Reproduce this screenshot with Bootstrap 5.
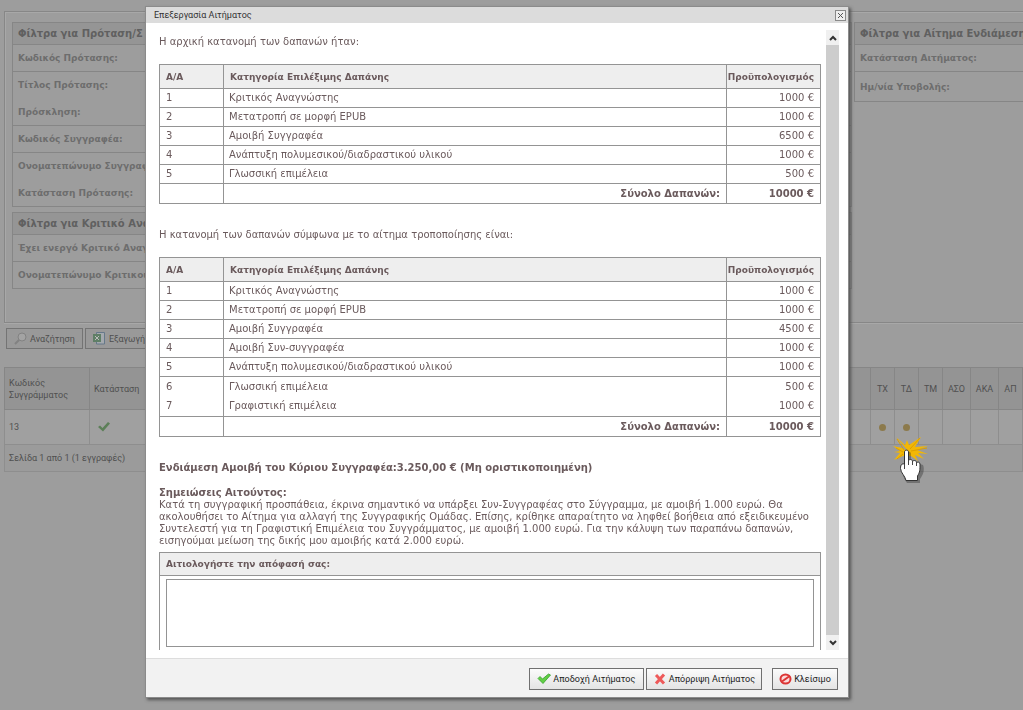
<!DOCTYPE html>
<html lang="el">
<head>
<meta charset="utf-8">
<meta name="viewport" content="width=device-width, initial-scale=1">
<title>Επεξεργασία Αιτήματος</title>
<link href="https://cdn.jsdelivr.net/npm/bootstrap@5.3.0/dist/css/bootstrap.min.css" rel="stylesheet">
<style>
  html, body { height: 100%; }
  body { background: #9d9d9d; font-family: "DejaVu Sans", Verdana, sans-serif; font-size: 10px; line-height: 12px; color: #6a5a5c; overflow: hidden; }
  .ui-narrow, .ui-narrow button { font-family: Roboto, Tahoma, sans-serif; font-size: 9px; }

  /* dimmed page */
  .page-dim { padding: 11px 0 0 4px; color: #6d6d6d; overflow: hidden; }
  .filter-box { border: 1px solid #878787; border-right: 0; box-shadow: inset 1px 1px 0 #a8a8a8, 0 1px 0 #a8a8a8; padding: 10px 0 0 7px; min-height: 312px; gap: 2px; overflow: hidden; }
  .filter-left { flex: 0 0 840px; }
  .filter-right { flex: 1 1 0; min-width: 0; }
  .filter-tbl { width: 100%; border: 1px solid #868686; margin-bottom: 5px; border-collapse: collapse; white-space: nowrap; }
  .filter-right .filter-tbl { border-right: 0; }
  .filter-tbl th { padding: 0 5px; font-weight: bold; font-size: 9px; }
  .filter-tbl thead th { background: #959595; height: 22px; font-size: 10px; color: #606060; border-bottom: 1px solid #868686; }
  .filter-right .filter-tbl th { padding-right: 0; }
  .filter-tbl tbody th { height: 27px; border-bottom: 1px solid #868686; }
  .filter-tbl tr.joined th { border-bottom: 0; }
  .filter-tbl.tall tbody tr:last-child th { height: 30px; }
  .tool-row { gap: 2px; padding: 5px 0 18px 2px; }
  .dim-btn { border: 1px solid #747474; background: #999; color: #4f4f4f; height: 21px; padding: 0 7px; gap: 3px; white-space: nowrap; min-width: 77px; }
  .grid-tbl { width: 100%; border: 1px solid #868686; border-collapse: collapse; table-layout: fixed; color: #505050; }
  .grid-tbl th { background: #949494; height: 42px; font-weight: normal; border: 1px solid #868686; padding: 0 4px; }
  .grid-tbl th.text-center { padding: 0; }
  .grid-tbl td { height: 35px; border: 1px solid #8e8e8e; padding: 0 4px; background: #a0a0a0; }
  .grid-tbl tfoot td { height: 27px; background: #9b9b9b; }
  .w-code { width: 85px; } .w-state { width: 60px; } .w-flag { width: 24px; } .w-wide { width: 28px; }
  .status-dot { width: 7px; height: 7px; border-radius: 50%; background: #8c7a4c; display: block; margin: auto; }

  /* dialog */
  .overlay { padding: 6px 174px 12px 145px; }
  .dlg { background: #fff; border: 1px solid #8b8b8b; box-shadow: 2px 2px 3px #555; }
  .dlg-title { background: #dcdcdc; height: 16px; padding: 0 2px 0 8px; color: #333; }
  .dlg-close { width: 11px; height: 11px; border: 1px solid #8a8a8a; background: #eee; padding: 0; }
  .dlg-body { flex: 1 1 0; min-height: 0; padding: 7px 9px 8px 13px; }
  .dlg-content { overflow: hidden; min-width: 0; padding-top: 6px; }
  .scroll-col { width: 13px; background: #cdcdcd; margin-left: 5px; }
  .scroll-btn { height: 15px; background: #f0f0f0; border: 0; padding: 0; }
  .dlg-foot { height: 39px; background: #f2f2f2; border-top: 1px solid #ddd; padding: 2px 10px 0 0; gap: 2px; }
  .cost-tbl { width: 100%; border-collapse: collapse; margin: 16px 0 25px; }
  .cost-tbl th, .cost-tbl td { border: 1px solid #949494; padding: 0 6px; height: 19px; }
  .cost-tbl td:nth-child(2) { padding-left: 5px; }
  .cost-tbl thead th { background: #eee; height: 24px; font-size: 9px; }
  .cost-tbl tfoot th, .cost-tbl tr.joined td, .cost-tbl tr.joined + tr td { height: 20px; }
  .cost-tbl .c-no { width: 64px; }
  .cost-tbl .c-sum { width: 94px; padding-left: 0; }
  .cost-tbl tr.joined td { border-bottom-style: hidden; }
  .lead-line { margin-bottom: 13px; }
  .note-text { margin-bottom: 5px; }
  .reason { border: 1px solid #949494; border-bottom: 0; }
  .reason label { height: 23px; background: #eee; border-bottom: 1px solid #949494; padding: 0 6px; font-weight: bold; font-size: 9px; }
  .reason textarea { height: 68px; border: 1px solid #949494; margin: 3px 6px 10px; resize: none; border-radius: 0; }
  .act { height: 22px; border: 1px solid #707070; background: linear-gradient(#fbfbfb, #e4e4e4); color: #222; padding: 0 6px; gap: 2px; white-space: nowrap; min-width: 66px; }
  .act-wide { min-width: 115px; }
  .hand { left: 892px; top: 436px; }
</style>
</head>
<body>
<main class="page-dim">
  <section class="filter-box d-flex align-items-start">
    <div class="filter-left">
      <table class="filter-tbl">
        <thead><tr><th>Φίλτρα για Πρόταση/Σ</th></tr></thead>
        <tbody>
          <tr><th>Κωδικός Πρότασης:</th></tr>
          <tr class="joined"><th>Τίτλος Πρότασης:</th></tr>
          <tr><th>Πρόσκληση:</th></tr>
          <tr><th>Κωδικός Συγγραφέα:</th></tr>
          <tr class="joined"><th>Ονοματεπώνυμο Συγγραφ</th></tr>
          <tr><th>Κατάσταση Πρότασης:</th></tr>
        </tbody>
      </table>
      <table class="filter-tbl">
        <thead><tr><th>Φίλτρα για Κριτικό Ανα</th></tr></thead>
        <tbody>
          <tr><th>Έχει ενεργό Κριτικό Αναγ</th></tr>
          <tr><th>Ονοματεπώνυμο Κριτικού</th></tr>
        </tbody>
      </table>
    </div>
    <div class="filter-right">
      <table class="filter-tbl tall">
        <thead><tr><th>Φίλτρα για Αίτημα Ενδιάμεση</th></tr></thead>
        <tbody>
          <tr><th>Κατάσταση Αιτήματος:</th></tr>
          <tr><th>Ημ/νία Υποβολής:</th></tr>
        </tbody>
      </table>
    </div>
  </section>
  <div class="tool-row d-flex ui-narrow">
    <button class="dim-btn d-flex align-items-center" type="button">
      <svg width="13" height="13" viewBox="0 0 13 13" fill="none"><circle cx="8" cy="5" r="4" fill="#a3a3a3" stroke="#828282"/><path d="M5 8L1 12" stroke="#828282" stroke-width="2"/></svg>
      Αναζήτηση</button>
    <button class="dim-btn d-flex align-items-center" type="button">
      <svg width="13" height="13" viewBox="0 0 13 13"><path d="M3.500 .5h8v11.500h-8z" fill="#a4a9ae" stroke="#66788a"/><path d="M0 2h8v8H0z" fill="#5f7f66"/><path d="M2 4l4 4M6 4L2 8" stroke="#bbb"/></svg>
      Εξαγωγή</button>
  </div>
  <table class="grid-tbl ui-narrow">
    <colgroup><col class="w-code"><col class="w-state"><col><col class="w-flag"><col class="w-flag"><col class="w-flag"><col class="w-wide"><col class="w-wide"><col class="w-flag"></colgroup>
    <thead><tr><th>Κωδικός Συγγράμματος</th><th>Κατάσταση</th><th></th><th class="text-center">ΤΧ</th><th class="text-center">ΤΔ</th><th class="text-center">ΤΜ</th><th class="text-center">ΑΣΟ</th><th class="text-center">ΑΚΑ</th><th class="text-center">ΑΠ</th></tr></thead>
    <tbody><tr><td>13</td><td><svg class="d-block ms-1" width="12" height="10" viewBox="0 0 12 10"><path d="M0 5l2-1.500L4.500 6 10 0l2 1.500L5 9.500z" fill="#5c7f58"/></svg></td><td></td><td><span class="status-dot"></span></td><td><span class="status-dot"></span></td><td></td><td></td><td></td><td></td></tr></tbody>
    <tfoot><tr><td colspan="9">Σελίδα 1 από 1 (1 εγγραφές)</td></tr></tfoot>
  </table>
</main>

<svg class="hand position-fixed" width="40" height="50" viewBox="0 0 40 50" aria-hidden="true">
  <path d="M16 15L4 1l9 8 2-5 2 5L29 1l-6 10 13-1-11 4 11 4-10-1 6 6-9-4 3 6-7-5-8 0-9 4 6-7-6-1 6-1-7-5 9 2z" fill="#f2b705"/>
  <path d="M18 13l10-11M19 15l16-3M12 14l-7-11M11 16l-7-4M11 18l-6 5" stroke="#dca000" fill="none"/>
  <path d="M15 18c0-3 4-3 4 0v7l12 4c2 5 0 10-3 14v4H15c-4-6-6-11-2-18z" fill="#222" opacity=".35"/>
  <path d="M12.500 16c0-2.500 4-2.500 4 0v9c0-2 3.500-2 4 0v1c0-2 3.500-2 4 0v1c1-1.500 3.500-1 3.500 1 0 6 0 8-2.500 12v4.500H14c-1-5-5-7-5.500-12 0-4 1.500-5 4-4.500z" fill="#fff" stroke="#333"/>
  <path d="M12.500 28v5M16.500 24v5M20.500 25v4M24.500 26v4" stroke="#444" fill="none"/>
</svg>

<div class="overlay position-fixed top-0 start-0 w-100 h-100">
  <div class="dlg d-flex flex-column h-100" role="dialog" aria-labelledby="dlgTitle">
    <div class="dlg-title d-flex align-items-center justify-content-between ui-narrow">
      <span id="dlgTitle">Επεξεργασία Αιτήματος</span>
      <button class="dlg-close d-flex align-items-center justify-content-center" type="button" aria-label="Κλείσιμο"><svg width="5" height="5" viewBox="0 0 5 5"><path d="M0 0l5 5M5 0L0 5" stroke="#555"/></svg></button>
    </div>
    <div class="dlg-body d-flex">
      <div class="dlg-content flex-grow-1">
        <div>Η αρχική κατανομή των δαπανών ήταν:</div>
        <table class="cost-tbl">
          <thead><tr><th class="c-no">Α/Α</th><th>Κατηγορία Επιλέξιμης Δαπάνης</th><th class="c-sum text-end">Προϋπολογισμός</th></tr></thead>
          <tbody>
            <tr><td>1</td><td>Κριτικός Αναγνώστης</td><td class="text-end">1000 €</td></tr>
            <tr><td>2</td><td>Μετατροπή σε μορφή EPUB</td><td class="text-end">1000 €</td></tr>
            <tr><td>3</td><td>Αμοιβή Συγγραφέα</td><td class="text-end">6500 €</td></tr>
            <tr><td>4</td><td>Ανάπτυξη πολυμεσικού/διαδραστικού υλικού</td><td class="text-end">1000 €</td></tr>
            <tr><td>5</td><td>Γλωσσική επιμέλεια</td><td class="text-end">500 €</td></tr>
          </tbody>
          <tfoot><tr><td></td><th class="text-end">Σύνολο Δαπανών:</th><th class="text-end">10000 €</th></tr></tfoot>
        </table>
        <div>Η κατανομή των δαπανών σύμφωνα με το αίτημα τροποποίησης είναι:</div>
        <table class="cost-tbl">
          <thead><tr><th class="c-no">Α/Α</th><th>Κατηγορία Επιλέξιμης Δαπάνης</th><th class="c-sum text-end">Προϋπολογισμός</th></tr></thead>
          <tbody>
            <tr><td>1</td><td>Κριτικός Αναγνώστης</td><td class="text-end">1000 €</td></tr>
            <tr><td>2</td><td>Μετατροπή σε μορφή EPUB</td><td class="text-end">1000 €</td></tr>
            <tr><td>3</td><td>Αμοιβή Συγγραφέα</td><td class="text-end">4500 €</td></tr>
            <tr><td>4</td><td>Αμοιβή Συν-συγγραφέα</td><td class="text-end">1000 €</td></tr>
            <tr><td>5</td><td>Ανάπτυξη πολυμεσικού/διαδραστικού υλικού</td><td class="text-end">1000 €</td></tr>
            <tr class="joined"><td>6</td><td>Γλωσσική επιμέλεια</td><td class="text-end">500 €</td></tr>
            <tr><td>7</td><td>Γραφιστική επιμέλεια</td><td class="text-end">1000 €</td></tr>
          </tbody>
          <tfoot><tr><td></td><th class="text-end">Σύνολο Δαπανών:</th><th class="text-end">10000 €</th></tr></tfoot>
        </table>
        <div class="fw-bold lead-line">Ενδιάμεση Αμοιβή του Κύριου Συγγραφέα:3.250,00 € (Μη οριστικοποιημένη)</div>
        <div class="fw-bold">Σημειώσεις Αιτούντος:</div>
        <div class="note-text">Κατά τη συγγραφική προσπάθεια, έκρινα σημαντικό να υπάρξει Συν-Συγγραφέας στο Σύγγραμμα, με αμοιβή 1.000 ευρώ. Θα ακολουθήσει το Αίτημα για αλλαγή της Συγγραφικής Ομάδας. Επίσης, κρίθηκε απαραίτητο να ληφθεί βοήθεια από εξειδικευμένο Συντελεστή για τη Γραφιστική Επιμέλεια του Συγγράμματος, με αμοιβή 1.000 ευρώ. Για την κάλυψη των παραπάνω δαπανών, εισηγούμαι μείωση της δικής μου αμοιβής κατά 2.000 ευρώ.</div>
        <div class="reason d-flex flex-column">
          <label class="d-flex align-items-center" for="reason">Αιτιολογήστε την απόφασή σας:</label>
          <textarea id="reason"></textarea>
        </div>
      </div>
      <div class="scroll-col d-flex flex-column justify-content-between flex-shrink-0">
        <button class="scroll-btn d-flex align-items-center justify-content-center" type="button" aria-label="Πάνω"><svg width="8" height="6" viewBox="0 0 8 6" fill="none"><path d="M1 5l3-3 3 3" stroke="#333" stroke-width="2"/></svg></button>
        <button class="scroll-btn d-flex align-items-center justify-content-center" type="button" aria-label="Κάτω"><svg width="8" height="6" viewBox="0 0 8 6" fill="none"><path d="M1 1l3 3 3-3" stroke="#333" stroke-width="2"/></svg></button>
      </div>
    </div>
    <div class="dlg-foot d-flex align-items-center justify-content-end ui-narrow">
      <button class="act act-wide d-flex align-items-center justify-content-center" type="button">
        <svg width="14" height="12" viewBox="0 0 14 12"><path d="M1 5.500l2-2 2.500 2.500L11.500 1l2 1L6 10.500z" fill="#62cf45" stroke="#35a02b" stroke-width=".8"/></svg>
        Αποδοχή Αιτήματος</button>
      <button class="act act-wide d-flex align-items-center justify-content-center" type="button">
        <svg width="14" height="12" viewBox="0 0 14 12"><path d="M3 2l8 8.500M11 1.500L3 10.500" stroke="#ee5a5a" stroke-width="3"/></svg>
        Απόρριψη Αιτήματος</button>
      <button class="act d-flex align-items-center justify-content-center ms-2" type="button">
        <svg width="13" height="12" viewBox="0 0 13 12" fill="none"><ellipse cx="6.500" cy="6" rx="5" ry="4.500" fill="#fbdada" stroke="#dc3535" stroke-width="2"/><path d="M3 8.500l7-5" stroke="#dc3535" stroke-width="2"/></svg>
        Κλείσιμο</button>
    </div>
  </div>
</div>
<script src="https://cdn.jsdelivr.net/npm/bootstrap@5.3.0/dist/js/bootstrap.bundle.min.js"></script>
</body>
</html>
